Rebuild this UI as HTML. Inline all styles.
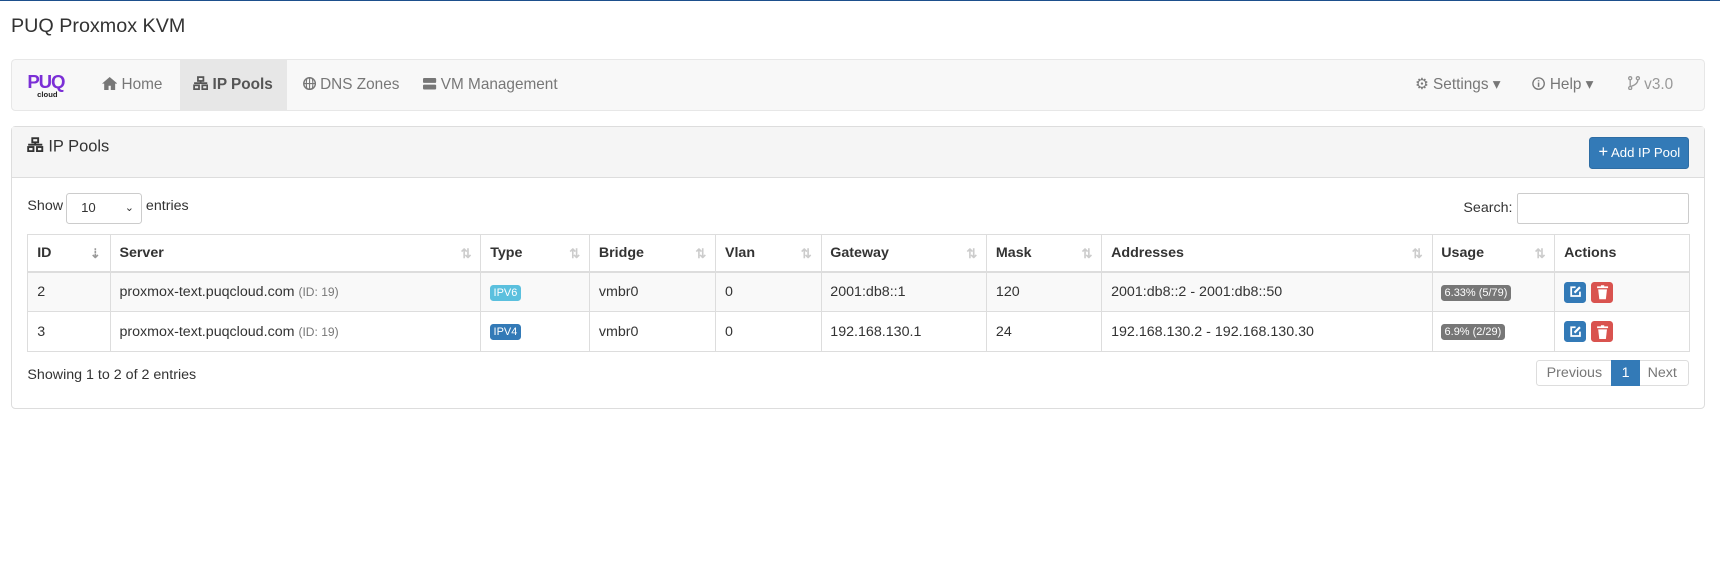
<!DOCTYPE html>
<html><head><meta charset="utf-8"><style>
*{box-sizing:border-box;margin:0;padding:0}
html,body{width:1720px;height:583px;overflow:hidden;background:#fff}
body{border-top:1px solid #1d4f8c}
#w{zoom:1.097;width:1568px;height:530px;position:relative;font-family:"Liberation Sans",sans-serif;font-size:13px;color:#333}
.a{position:absolute}
h1{position:absolute;left:10px;top:13px;font-size:18px;font-weight:normal;color:#333}
.nav{left:10px;top:53px;width:1544px;height:47px;background:#f8f8f8;border:1px solid #e7e7e7;border-radius:4px}
.ni{position:absolute;top:0;height:45px;line-height:45px;color:#777;font-size:14px}
.panel{left:10px;top:114px;width:1544px;height:258px;border:1px solid #ddd;border-radius:4px}
.ph{position:absolute;left:0;top:0;width:100%;height:46px;background:#f5f5f5;border-bottom:1px solid #ddd}
.btn{position:absolute;background:#337ab7;border:1px solid #2e6da4;color:#fff;border-radius:3px;font-size:12px}
table{position:absolute;left:25px;top:212px;border-collapse:collapse;font-size:13px}
td,th{border:1px solid #ddd;padding:0 8px;text-align:left;position:relative}
th{height:35px;border-bottom:2px solid #ddd}
td{height:36px}
tr.o td{background:#f9f9f9}
.s{position:absolute;right:8px;top:10px;color:#ccc;font-size:12px}
.lab{display:inline-block;font-size:10px;color:#fff;padding:2px 3px;border-radius:3px;line-height:11px}
.ib{display:inline-block;width:20px;height:19px;border-radius:3px;vertical-align:middle;margin-right:1px;position:relative}
.ib svg{position:absolute;left:4px;top:3px}
.g{color:#777;font-size:11px}
</style></head><body><div id="w">
<h1>PUQ Proxmox KVM</h1>
<div class="a nav">
<div class="ni" style="left:14px;top:0"><div style="color:#7b2fd6;font-weight:bold;font-size:17px;line-height:18px;margin-top:11px;letter-spacing:-1px">PUQ</div><div style="color:#222;font-size:7px;font-weight:bold;line-height:6px;margin-left:9px">cloud</div></div>
<div class="ni" style="left:82px">
<svg width="14" height="12" viewBox="0 0 14 12" style="vertical-align:-1px"><path d="M7 0L0 6h2v6h4V8h2v4h4V6h2z" fill="#777"/></svg> Home</div>
<div class="ni" style="left:153px;width:98px;background:#e7e7e7;color:#555;font-weight:bold;padding-left:12px">
<svg width="14" height="13" viewBox="0 0 14 13" style="vertical-align:-1px"><g fill="none" stroke="#555" stroke-width="1.6"><rect x="4.5" y="1" width="5" height="3.5"/><rect x="1" y="8.5" width="4.5" height="3.5"/><rect x="8.5" y="8.5" width="4.5" height="3.5"/><path d="M7 4.5v2M1 6.5h12"/></g></svg> IP Pools</div>
<div class="ni" style="left:265px"><svg width="12" height="12" viewBox="0 0 12 12" style="vertical-align:-1px"><circle cx="6" cy="6" r="5.3" fill="none" stroke="#777" stroke-width="1.3"/><path d="M6 1v10M1 6h10M3.5 1.5q-1 4.5 0 9M8.5 1.5q1 4.5 0 9" fill="none" stroke="#777"/></svg> DNS Zones</div>
<div class="ni" style="left:375px"><svg width="12" height="11" viewBox="0 0 12 11" style="vertical-align:-1px"><rect y="0" width="12" height="4.5" rx="1" fill="#777"/><rect y="6" width="12" height="4.5" rx="1" fill="#777"/></svg> VM Management</div>
<div class="ni" style="left:1279px"><span style="font-size:14px">⚙</span> Settings ▾</div>
<div class="ni" style="left:1386px"><svg width="12" height="12" viewBox="0 0 12 12" style="vertical-align:-1px"><circle cx="6" cy="6" r="5.2" fill="none" stroke="#777" stroke-width="1.2"/><path d="M6 5v4M6 3v1" stroke="#777" stroke-width="1.4"/></svg> Help ▾</div>
<div class="ni" style="left:1473px;color:#999"><svg width="11" height="13" viewBox="0 0 11 13" style="vertical-align:-1px"><g fill="none" stroke="#999" stroke-width="1.2"><circle cx="2" cy="2" r="1.4"/><circle cx="2" cy="11" r="1.4"/><circle cx="9" cy="2" r="1.4"/><path d="M2 3.4v6.2M9 3.4q0 4-6 6"/></g></svg> v3.0</div>
</div>
<div class="a panel"><div class="ph">
<div class="a" style="left:14px;top:9px;font-size:15px;color:#333"><svg width="15" height="14" viewBox="0 0 14 13" style="vertical-align:-1px"><g fill="none" stroke="#333" stroke-width="1.6"><rect x="4.5" y="1" width="5" height="3.5"/><rect x="1" y="8.5" width="4.5" height="3.5"/><rect x="8.5" y="8.5" width="4.5" height="3.5"/><path d="M7 4.5v2M1 6.5h12"/></g></svg> IP Pools</div>
<div class="btn" style="left:1438px;top:9px;width:91px;height:29px;line-height:27px;text-align:center"><b style="font-size:15px;font-weight:normal">+</b> Add IP Pool</div>
</div></div>
<div class="a" style="left:25px;top:180px">Show</div>
<div class="a" style="left:60px;top:175px;width:69px;height:28px;border:1px solid #ccc;border-radius:3px;font-size:12px;line-height:26px;padding-left:13px">10<span style="position:absolute;right:6px;font-size:10px">⌄</span></div>
<div class="a" style="left:133px;top:180px">entries</div>
<div class="a" style="left:1334px;top:181px">Search:</div>
<div class="a" style="left:1383px;top:175px;width:157px;height:28px;border:1px solid #ccc;border-radius:2px"></div>
<table>
<tr><th style="width:75px">ID<span class="s" style="color:#999">⇣</span></th><th style="width:338px">Server<span class="s">⇅</span></th><th style="width:99px">Type<span class="s">⇅</span></th><th style="width:115px">Bridge<span class="s">⇅</span></th><th style="width:96px">Vlan<span class="s">⇅</span></th><th style="width:151px">Gateway<span class="s">⇅</span></th><th style="width:105px">Mask<span class="s">⇅</span></th><th style="width:301px">Addresses<span class="s">⇅</span></th><th style="width:112px">Usage<span class="s">⇅</span></th><th style="width:123px">Actions</th></tr>
<tr class="o"><td>2</td><td>proxmox-text.puqcloud.com <span class="g">(ID: 19)</span></td><td><span class="lab" style="background:#5bc0de">IPV6</span></td><td>vmbr0</td><td>0</td><td>2001:db8::1</td><td>120</td><td>2001:db8::2 - 2001:db8::50</td><td><span class="lab" style="background:#777">6.33% (5/79)</span></td><td><span class="ib" style="background:#337ab7"><svg width="12" height="12" viewBox="0 0 12 12"><path d="M6 2H2v8h8V6" fill="none" stroke="#fff" stroke-width="1.6"/><path d="M5 7l5-5" stroke="#fff" stroke-width="2"/></svg></span> <span class="ib" style="background:#d9534f"><svg width="12" height="13" viewBox="0 0 12 13"><path d="M1 2h10M4.5 1h3" stroke="#fff" stroke-width="1.6"/><path d="M2 4h8l-1 9H3z" fill="#fff"/></svg></span></td></tr>
<tr><td>3</td><td>proxmox-text.puqcloud.com <span class="g">(ID: 19)</span></td><td><span class="lab" style="background:#337ab7">IPV4</span></td><td>vmbr0</td><td>0</td><td>192.168.130.1</td><td>24</td><td>192.168.130.2 - 192.168.130.30</td><td><span class="lab" style="background:#777">6.9% (2/29)</span></td><td><span class="ib" style="background:#337ab7"><svg width="12" height="12" viewBox="0 0 12 12"><path d="M6 2H2v8h8V6" fill="none" stroke="#fff" stroke-width="1.6"/><path d="M5 7l5-5" stroke="#fff" stroke-width="2"/></svg></span> <span class="ib" style="background:#d9534f"><svg width="12" height="13" viewBox="0 0 12 13"><path d="M1 2h10M4.5 1h3" stroke="#fff" stroke-width="1.6"/><path d="M2 4h8l-1 9H3z" fill="#fff"/></svg></span></td></tr>
</table>
<div class="a" style="left:25px;top:334px">Showing 1 to 2 of 2 entries</div>
<div class="a" style="left:1400px;top:327px;width:140px;height:24px;border:1px solid #ddd;border-radius:3px;font-size:13px;line-height:22px;color:#777">
<span class="a" style="left:9px">Previous</span><span class="a" style="left:68px;top:-1px;width:26px;height:24px;line-height:24px;background:#337ab7;color:#fff;text-align:center">1</span><span class="a" style="left:101px">Next</span></div>
</div></body></html>
